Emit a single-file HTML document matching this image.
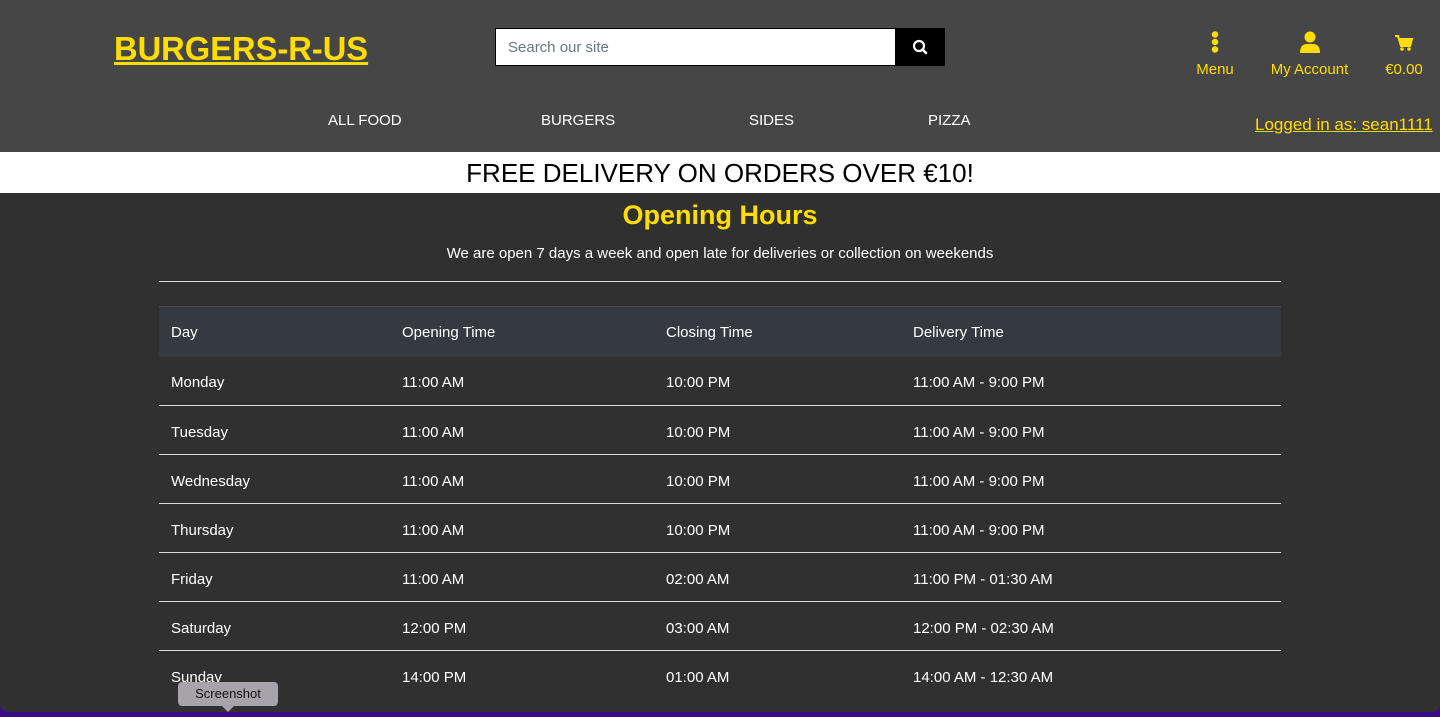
<!DOCTYPE html>
<html><head><meta charset="utf-8"><style>
*{margin:0;padding:0;box-sizing:border-box}
html,body{width:1440px;height:717px;overflow:hidden;background:#3a0a8a;font-family:"Liberation Sans",sans-serif}
.page{position:absolute;left:0;top:0;width:1440px;height:712px;background:#303030;border-radius:0 0 8px 8px;overflow:hidden}
.hdr{position:absolute;left:0;top:0;width:1440px;height:152px;background:#464646}
.logo{position:absolute;left:114px;top:30px;font-size:33px;font-weight:900;color:#ffdd00;text-decoration:underline;text-decoration-thickness:3px;letter-spacing:0;transform:scaleX(0.99);transform-origin:left}
.search{position:absolute;left:495px;top:28px;width:401px;height:38px;background:#fff;border:1px solid #000;font-size:15px;color:#6c757d;padding:10px 12px}
.sbtn{position:absolute;left:895px;top:28px;width:50px;height:38px;background:#000}
.icn{position:absolute;color:#ffdd00;font-size:15px;text-align:center}
.nav{position:absolute;top:112px;color:#fff;font-size:15px}
.login{position:absolute;left:1255px;top:115px;color:#ffdd00;font-size:17px;text-decoration:underline}
.banner{position:absolute;left:0;top:152px;width:1440px;height:41px;background:#fff;text-align:center;font-size:26px;line-height:43px;color:#000}
h1{position:absolute;left:0;width:1440px;top:200px;text-align:center;color:#ffdd00;font-size:27px;font-weight:900}
.sub{position:absolute;left:0;width:1440px;top:245px;text-align:center;color:#fff;font-size:15px}
.hr{position:absolute;left:159px;width:1122px;top:281px;height:1px;background:#ddd}
table{position:absolute;left:159px;top:306px;width:1122px;border-collapse:collapse;color:#fff;font-size:15px}
th{background:#343a40;height:50px;text-align:left;font-weight:normal;padding-left:12px;padding-top:2px;border-top:1px solid #454d55}
td{height:49px;padding-left:12px;padding-top:4px;border-top:1px solid #ddd}
tr:nth-child(2) td{border-top:none}
.tip{position:absolute;left:178px;top:682px;width:100px;height:24px;background:#a7a3ab;border-radius:4px;font-size:13px;color:#111;text-align:center;line-height:24px}
.tip:after{content:"";position:absolute;left:44px;bottom:-6px;border:6px solid transparent;border-top-color:#a7a3ab;border-bottom:0}
</style></head><body>
<div class="page">
<div class="hdr">
<div class="logo">BURGERS-R-US</div>
<div class="search">Search our site</div>
<div class="sbtn"><svg width="50" height="38"><circle cx="24" cy="18" r="5" fill="none" stroke="#fff" stroke-width="2.2"/><line x1="27.5" y1="21.5" x2="31" y2="25" stroke="#fff" stroke-width="2.6" stroke-linecap="round"/></svg></div>
<div class="icn" style="left:1190px;top:31px;width:50px"><svg width="10" height="22"><circle cx="5" cy="3.5" r="3.2" fill="#ffdd00"/><circle cx="5" cy="11" r="3.2" fill="#ffdd00"/><circle cx="5" cy="18.5" r="3.2" fill="#ffdd00"/></svg><div style="margin-top:4px">Menu</div></div>
<div class="icn" style="left:1262px;top:31px;width:95px"><svg width="22" height="22"><circle cx="11" cy="6" r="5.5" fill="#ffdd00"/><path d="M1 22 Q1 13 8 13 H14 Q21 13 21 22Z" fill="#ffdd00"/></svg><div style="margin-top:4px">My Account</div></div>
<div class="icn" style="left:1378px;top:31px;width:52px"><svg width="20" height="22"><path d="M1 5 H4 L7 15 H16 L18 8 H6" fill="#ffdd00" stroke="#ffdd00" stroke-width="2"/><circle cx="8" cy="18" r="1.8" fill="#ffdd00"/><circle cx="15" cy="18" r="1.8" fill="#ffdd00"/></svg><div style="margin-top:4px">€0.00</div></div>
<div class="nav" style="left:328px">ALL FOOD</div>
<div class="nav" style="left:541px">BURGERS</div>
<div class="nav" style="left:749px">SIDES</div>
<div class="nav" style="left:928px">PIZZA</div>
<div class="login">Logged in as: sean1111</div>
</div>
<div class="banner">FREE DELIVERY ON ORDERS OVER €10!</div>
<h1>Opening Hours</h1>
<div class="sub">We are open 7 days a week and open late for deliveries or collection on weekends</div>
<div class="hr"></div>
<table>
<tr><th style="width:231px">Day</th><th style="width:264px">Opening Time</th><th style="width:247px">Closing Time</th><th>Delivery Time</th></tr>
<tr><td>Monday</td><td>11:00 AM</td><td>10:00 PM</td><td>11:00 AM - 9:00 PM</td></tr>
<tr><td>Tuesday</td><td>11:00 AM</td><td>10:00 PM</td><td>11:00 AM - 9:00 PM</td></tr>
<tr><td>Wednesday</td><td>11:00 AM</td><td>10:00 PM</td><td>11:00 AM - 9:00 PM</td></tr>
<tr><td>Thursday</td><td>11:00 AM</td><td>10:00 PM</td><td>11:00 AM - 9:00 PM</td></tr>
<tr><td>Friday</td><td>11:00 AM</td><td>02:00 AM</td><td>11:00 PM - 01:30 AM</td></tr>
<tr><td>Saturday</td><td>12:00 PM</td><td>03:00 AM</td><td>12:00 PM - 02:30 AM</td></tr>
<tr><td>Sunday</td><td>14:00 PM</td><td>01:00 AM</td><td>14:00 AM - 12:30 AM</td></tr>
</table>
<div class="tip">Screenshot</div>
</div>
</body></html>
